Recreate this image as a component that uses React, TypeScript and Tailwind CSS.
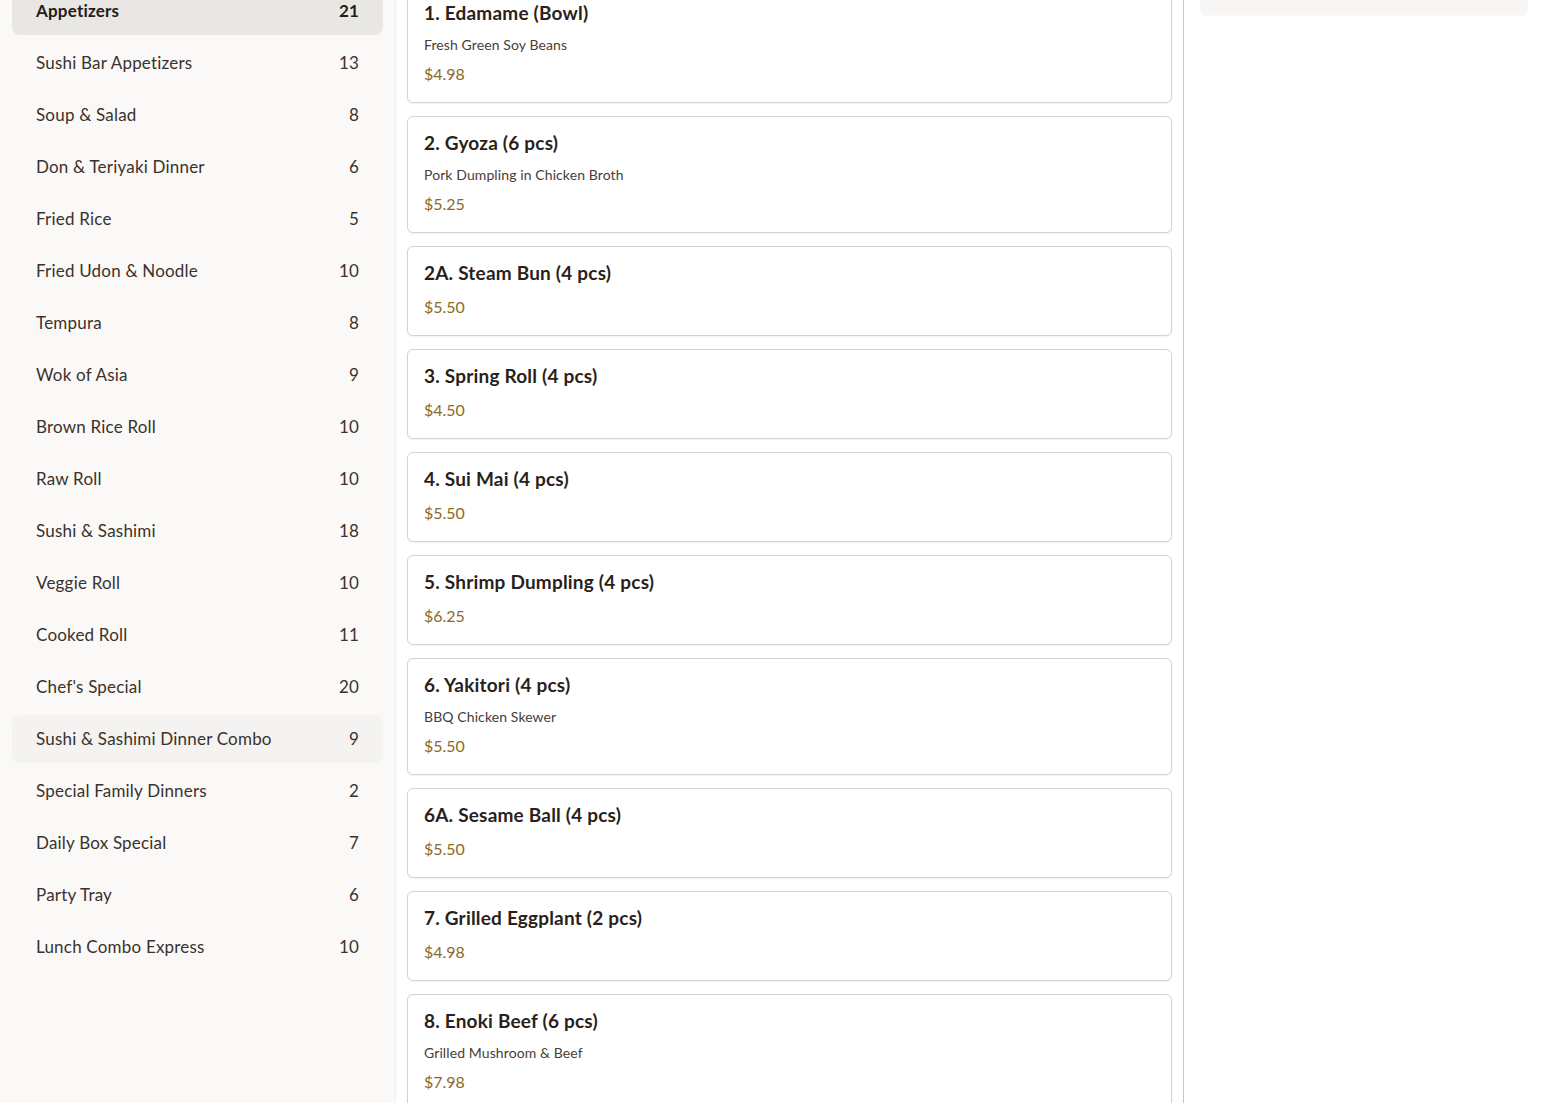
const categories: [string, number][] = [
  ['Appetizers', 21],
  ['Sushi Bar Appetizers', 13],
  ['Soup & Salad', 8],
  ['Don & Teriyaki Dinner', 6],
  ['Fried Rice', 5],
  ['Fried Udon & Noodle', 10],
  ['Tempura', 8],
  ['Wok of Asia', 9],
  ['Brown Rice Roll', 10],
  ['Raw Roll', 10],
  ['Sushi & Sashimi', 18],
  ['Veggie Roll', 10],
  ['Cooked Roll', 11],
  ["Chef's Special", 20],
  ['Sushi & Sashimi Dinner Combo', 9],
  ['Special Family Dinners', 2],
  ['Daily Box Special', 7],
  ['Party Tray', 6],
  ['Lunch Combo Express', 10],
]

const items: { name: string; desc?: string; price: string }[] = [
  { name: '1. Edamame (Bowl)', desc: 'Fresh Green Soy Beans', price: '$4.98' },
  { name: '2. Gyoza (6 pcs)', desc: 'Pork Dumpling in Chicken Broth', price: '$5.25' },
  { name: '2A. Steam Bun (4 pcs)', price: '$5.50' },
  { name: '3. Spring Roll (4 pcs)', price: '$4.50' },
  { name: '4. Sui Mai (4 pcs)', price: '$5.50' },
  { name: '5. Shrimp Dumpling (4 pcs)', price: '$6.25' },
  { name: '6. Yakitori (4 pcs)', desc: 'BBQ Chicken Skewer', price: '$5.50' },
  { name: '6A. Sesame Ball (4 pcs)', price: '$5.50' },
  { name: '7. Grilled Eggplant (2 pcs)', price: '$4.98' },
  { name: '8. Enoki Beef (6 pcs)', desc: 'Grilled Mushroom & Beef', price: '$7.98' },
]

export default function App() {
  return (
    <div className="h-[1103px] overflow-hidden bg-white flex font-['Lato',sans-serif] text-[#2a221e]">
      <aside className="w-[396px] shrink-0 bg-[#faf9f7] border-r border-[#f0eeeb] px-3">
        <ul className="-mt-[13px] flex flex-col gap-1">
          {categories.map(([name, count], i) => (
            <li
              key={name}
              className={
                i === 0
                  ? 'h-12 flex items-center justify-between px-6 rounded-lg bg-[#e9e7e4] text-[17px] tracking-[0.2px] font-bold text-[#241d19]'
                  : i === 14
                  ? 'h-12 flex items-center justify-between px-6 rounded-lg bg-[#f4f3f1] text-[17px] tracking-[0.2px] text-[#3a322d]'
                  : 'h-12 flex items-center justify-between px-6 rounded-lg text-[17px] tracking-[0.2px] text-[#3a322d]'
              }
            >
              <span>{name}</span>
              <span>{count}</span>
            </li>
          ))}
        </ul>
      </aside>

      <main className="w-[788px] shrink-0 px-[11px] border-r border-[#c9c6c2]">
        <div className="-mt-[15px] flex flex-col gap-[13px]">
          {items.map((it, i) => (
            <div
              key={it.name}
              className={
                (i === 0 ? 'pt-[17px] ' : 'pt-4 ') +
                'bg-white border border-[#d6d3cf] rounded-md shadow-[0_1px_2px_rgba(0,0,0,0.06)] px-4 pb-4'
              }
            >
              <div className="text-[19px] leading-5 font-bold tracking-[0.2px] text-[#2a1f1b]">{it.name}</div>
              {it.desc && (
                <div className="mt-3 text-[14px] leading-5 tracking-[0.1px] text-[#4a3d36]">{it.desc}</div>
              )}
              <div className={(it.desc ? 'mt-[7px]' : 'mt-3') + ' text-[16px] leading-6 text-[#8a6a27]'}>
                {it.price}
              </div>
            </div>
          ))}
        </div>
      </main>

      <section className="flex-1 px-4">
        <div className="h-[15px] bg-[#f7f6f4] rounded-b-lg shadow-[0_1px_2px_rgba(0,0,0,0.03)]" />
      </section>
    </div>
  )
}
